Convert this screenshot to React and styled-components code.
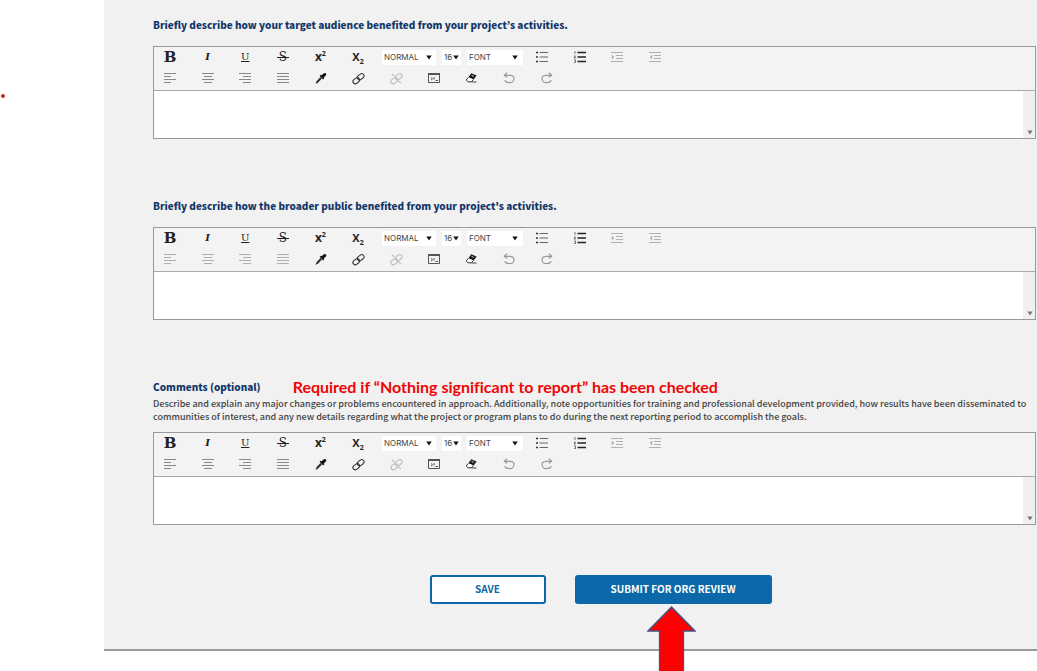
import styled, { createGlobalStyle } from 'styled-components'

const GlobalStyle = createGlobalStyle`
  * { box-sizing: border-box; }
  body {
    margin: 0;
    background: #fff;
    font-family: "Noto Sans CJK KR", "Open Sans", sans-serif;
  }
`;

const Page = styled.div`
  display: flex;
  align-items: flex-start;
  min-height: 100vh;
  overflow: hidden;
`;

const Gutter = styled.aside`
  flex: 0 0 104px;
  padding: 94px 0 0 1px;
`;

const RedDot = styled.div`
  width: 4px;
  height: 4px;
  border-radius: 50%;
  background: #d0202e;
`;

const Panel = styled.form`
  flex: 1;
  min-width: 0;
  padding: 17px 1px 45px 49px;
  background: #f1f1f1;
  border-bottom: 2px solid #9a9a9a;
`;

const Section = styled.section`
  margin-bottom: ${props => props.$last ? '50px' : '59px'};
`;

const LabelRow = styled.div`
  display: flex;
  align-items: center;
  gap: 32px;
  height: 16px;
`;

const Label = styled.label`
  font-size: 10px;
  line-height: 16px;
  font-weight: 900;
  color: #12376a;
  white-space: nowrap;
`;

const Required = styled.span`
  font-family: Lato, sans-serif;
  font-size: 16px;
  line-height: 16px;
  font-weight: 700;
  font-variant-ligatures: none;
  color: #f00505;
  white-space: nowrap;
`;

const Description = styled.p`
  margin: 2px 0 0;
  padding-right: 8px;
  font-size: 9px;
  line-height: 13px;
  font-weight: 500;
  color: #444;
`;

const Editor = styled.div`
  margin-top: ${props => props.$tight ? '9px' : '13px'};
  border: 1px solid #999;
  background: #fff;
`;

const Toolbar = styled.div`
  padding: 0 3px 1px;
  background: #f3f3f3;
  border-bottom: 1px solid #aaa;
`;

const ToolRow = styled.div`
  display: flex;
  align-items: center;
  height: 21px;
`;

const ToolGroup = styled.div`
  display: flex;
  justify-content: space-between;
  width: ${props => props.$width}px;
`;

const ToolButton = styled.button`
  display: flex;
  align-items: center;
  justify-content: center;
  width: 26px;
  height: 20px;
  padding: 0 0 1px;
  border: 0;
  background: none;
  color: #222;
`;

const Glyph = styled.span`
  font-family: ${props => props.$sans ? '"Open Sans", sans-serif' : '"DejaVu Serif", serif'};
  font-size: ${props => props.$size}px;
  line-height: 16px;
  font-weight: ${props => props.$bold ? 700 : 400};
  font-style: ${props => props.$italic ? 'italic' : 'normal'};
  text-decoration: ${props => props.$underline ? 'underline' : 'none'};

  sup, sub {
    font-size: 7px;
    line-height: 0;
  }
`;

const StruckGlyph = styled(Glyph)`
  position: relative;

  &::after {
    content: '';
    position: absolute;
    top: 8px;
    left: -2px;
    right: -2px;
    height: 1px;
    background: #222;
  }
`;

const Selects = styled.div`
  display: flex;
  gap: 6px;
  margin: 0 6px 0 11px;
`;

const SelectBox = styled.div`
  position: relative;
  width: ${props => props.$width}px;
  height: 15px;
  background: #fff;

  svg {
    position: absolute;
    top: 5px;
    right: ${props => props.$caret}px;
    pointer-events: none;
  }
`;

const Select = styled.select`
  display: block;
  width: 100%;
  height: 15px;
  padding: 0 0 0 2px;
  border: 0;
  appearance: none;
  background: transparent;
  font-family: Inter, sans-serif;
  font-size: 8px;
  line-height: 15px;
  color: #444;
`;

const TextRow = styled.div`
  display: flex;
  height: 47px;
`;

const TextArea = styled.textarea`
  flex: 1;
  min-width: 0;
  padding: 6px;
  border: 0;
  outline: 0;
  resize: none;
  background: #fff;
  font-family: inherit;
  font-size: 11px;
`;

const ScrollTrack = styled.div`
  display: flex;
  align-items: flex-end;
  justify-content: center;
  width: 12px;
  padding: 0 0 3px 2px;
  background: #f0f0f0;
`;

const Actions = styled.div`
  display: flex;
  justify-content: center;
  gap: 29px;
  padding-left: 12px;
`;

const ActionButton = styled.button`
  width: ${props => props.$primary ? '197px' : '116px'};
  height: 29px;
  padding: 0 0 1px;
  border: 2px solid #0b69a9;
  border-radius: 3px;
  background: ${props => props.$primary ? '#0b69a9' : '#fff'};
  color: ${props => props.$primary ? '#fff' : '#0b69a9'};
  font-family: inherit;
  font-size: 10px;
  line-height: 16px;
  font-weight: 700;
`;

const SubmitSpot = styled.div`
  display: flex;
  position: relative;
`;

const Arrow = styled.svg`
  position: absolute;
  top: 31px;
  left: 72px;
`;

const Lines = ({ rows, color = '#888' }) => (
  <svg width="14" height="12" viewBox="0 0 14 12" stroke={color} strokeWidth="1">
    {rows.map(([x1, x2], i) => (
      <path key={i} d={`M${x1} ${i * 3 + 1.5}H${x2}`} />
    ))}
  </svg>
)

const ALIGN = [
  ['Align left', [[1, 13], [1, 8], [1, 13], [1, 8]]],
  ['Align center', [[1, 13], [3, 11], [1, 13], [3, 11]]],
  ['Align right', [[1, 13], [5, 13], [1, 13], [5, 13]]],
  ['Justify', [[1, 13], [1, 13], [1, 13], [1, 13]]],
]

const Pencil = () => (
  <svg width="13" height="13" viewBox="0 0 13 13">
    <path d="M1.5 12L2.6 9L6.5 5L8 6.4L4.2 10.6Z" fill="#333" />
    <path d="M5.6 3.8L6.8 2.8L7.6 3.2L9.5 1.4Q11 .6 12 1.5Q12.8 2.6 11.6 3.8L9.8 5.5L10.2 6.2L9.2 7.4Z" fill="#111" />
  </svg>
)

const Chain = ({ broken }) => (
  <svg width="13" height="13" viewBox="0 0 13 13" fill="none" stroke={broken ? '#bbb' : '#333'} strokeWidth="1.1">
    <rect x="5.1" y="2.4" width="7.2" height="4.6" rx="2.3" transform="rotate(-38 8.7 4.7)" />
    <rect x=".7" y="6.4" width="7.2" height="4.6" rx="2.3" transform="rotate(-38 4.3 8.7)" />
    {broken && <path d="M2 2L4.2 4.2M8.8 9L11 11.2" />}
  </svg>
)

const Embed = () => (
  <svg width="14" height="12" viewBox="0 0 14 12" fill="none" stroke="#555">
    <path d="M1.5 1.5H12.5V10.5H1.5Z" />
    <path d="M1 2H13" strokeWidth="2" />
    <path d="M4 5.5L5.5 6.8L4 8.2M7 5V7.5M8.5 8.5H11" />
  </svg>
)

const EraserIcon = () => (
  <svg width="13" height="12" viewBox="0 0 13 12">
    <path d="M6.2 1.2L11.6 3.4L8.6 7.4L3.4 5.2Z" fill="#1c1c1c" />
    <path d="M3.4 5.4L1.2 8L3 9.8H6.4L8.5 7.4" fill="#fff" stroke="#333" />
    <path d="M6.5 10H11.5" stroke="#444" />
    <path d="M6.6 3.4L8.6 4.3" stroke="#ddd" />
  </svg>
)

const Turn = ({ redo }) => (
  <svg width="14" height="12" viewBox="0 0 14 12" fill="none" stroke="#999" strokeWidth="1.2">
    <g transform={redo ? 'translate(14 0) scale(-1 1)' : undefined}>
      <path d="M2.5 3.3H8.2Q12.2 3.6 12 7Q11.4 10.7 7.4 10.7Q4 10.7 2.7 8.4" />
      <path d="M5.2 .8L2.3 3.3L5.2 5.6" />
    </g>
  </svg>
)

const ListIcon = ({ ordered }) => (
  <svg width="14" height="12" viewBox="0 0 14 12" fill="none" stroke={ordered ? '#222' : '#666'}>
    <path d="M4.5 1.5H13M4.5 6H13M4.5 10.5H13" strokeWidth={ordered ? 1.4 : 1} />
    {ordered
      ? <path d="M2 0V3M1 5H2.5L1 7H3M1 9H2.5V11.5H1" strokeWidth=".6" />
      : <path d="M1 1.5H3M1 6H3M1 10.5H3" strokeWidth="1.6" stroke="#333" />}
  </svg>
)

const Indent = ({ out }) => (
  <svg width="14" height="12" viewBox="0 0 14 12" fill="none" stroke="#b0b0b0">
    <path d="M1 1.5H13M6 4.5H13M6 7.5H13M1 10.5H13" />
    <path d={out ? 'M4 4L2 6L4 8Z' : 'M2 4L4 6L2 8Z'} fill="#b0b0b0" strokeWidth=".5" />
  </svg>
)

const Caret = ({ color = '#111' }) => (
  <svg width="6" height="5" viewBox="0 0 6 5">
    <path d="M.3 .5H5.7L3 4.6Z" fill={color} />
  </svg>
)

function Tool({ label, children }) {
  return <ToolButton type="button" aria-label={label}>{children}</ToolButton>
}

function Dropdown({ label, width, caret, value }) {
  return (
    <SelectBox $width={width} $caret={caret}>
      <Select aria-label={label} defaultValue={value}>
        <option>{value}</option>
      </Select>
      <Caret />
    </SelectBox>
  )
}

function RichText({ id, tight, alignColor }) {
  return (
    <Editor $tight={tight}>
      <Toolbar>
        <ToolRow>
          <ToolGroup $width={214}>
            <Tool label="Bold"><Glyph $size={15} $bold>B</Glyph></Tool>
            <Tool label="Italic"><Glyph $size={10} $italic $bold>I</Glyph></Tool>
            <Tool label="Underline"><Glyph $size={10} $underline>U</Glyph></Tool>
            <Tool label="Strikethrough"><StruckGlyph $size={12}>S</StruckGlyph></Tool>
            <Tool label="Superscript"><Glyph $size={12} $sans $bold>x<sup>2</sup></Glyph></Tool>
            <Tool label="Subscript"><Glyph $size={11} $sans $bold>X<sub>2</sub></Glyph></Tool>
          </ToolGroup>
          <Selects>
            <Dropdown label="Block type" width={54} caret={4} value="NORMAL" />
            <Dropdown label="Font size" width={19} caret={2} value="16" />
            <Dropdown label="Font family" width={56} caret={5} value="FONT" />
          </Selects>
          <ToolGroup $width={139}>
            <Tool label="Bulleted list"><ListIcon /></Tool>
            <Tool label="Numbered list"><ListIcon ordered /></Tool>
            <Tool label="Indent"><Indent /></Tool>
            <Tool label="Outdent"><Indent out /></Tool>
          </ToolGroup>
        </ToolRow>
        <ToolRow>
          <ToolGroup $width={403}>
            {ALIGN.map(([label, rows]) => (
              <Tool key={label} label={label}><Lines rows={rows} color={alignColor} /></Tool>
            ))}
            <Tool label="Text color"><Pencil /></Tool>
            <Tool label="Link"><Chain /></Tool>
            <Tool label="Unlink"><Chain broken /></Tool>
            <Tool label="Embed"><Embed /></Tool>
            <Tool label="Clear formatting"><EraserIcon /></Tool>
            <Tool label="Undo"><Turn /></Tool>
            <Tool label="Redo"><Turn redo /></Tool>
          </ToolGroup>
        </ToolRow>
      </Toolbar>
      <TextRow>
        <TextArea id={id} />
        <ScrollTrack><Caret color="#777" /></ScrollTrack>
      </TextRow>
    </Editor>
  )
}

export default function App() {
  return (
    <Page>
      <GlobalStyle />
      <Gutter><RedDot /></Gutter>
      <Panel onSubmit={e => e.preventDefault()}>
        <Section>
          <LabelRow>
            <Label htmlFor="audience">Briefly describe how your target audience benefited from your project’s activities.</Label>
          </LabelRow>
          <RichText id="audience" />
        </Section>

        <Section>
          <LabelRow>
            <Label htmlFor="public">Briefly describe how the broader public benefited from your project's activities.</Label>
          </LabelRow>
          <RichText id="public" alignColor="#b0b0b0" />
        </Section>

        <Section $last>
          <LabelRow>
            <Label htmlFor="comments">Comments (optional)</Label>
            <Required>Required if “Nothing significant to report” has been checked</Required>
          </LabelRow>
          <Description>
            Describe and explain any major changes or problems encountered in approach. Additionally, note opportunities for training and professional development provided, how results have been disseminated to communities of interest, and any new details regarding what the project or program plans to do during the next reporting period to accomplish the goals.
          </Description>
          <RichText id="comments" tight />
        </Section>

        <Actions>
          <ActionButton type="button">SAVE</ActionButton>
          <SubmitSpot>
            <ActionButton type="submit" $primary>SUBMIT FOR ORG REVIEW</ActionButton>
            <Arrow width="49" height="66" viewBox="0 0 49 66">
              <path d="M24.5 1L48 25H36.5V68H12.5V25H1Z" fill="#fe0000" stroke="#3b5488" strokeWidth="1.3" />
            </Arrow>
          </SubmitSpot>
        </Actions>
      </Panel>
    </Page>
  )
}
